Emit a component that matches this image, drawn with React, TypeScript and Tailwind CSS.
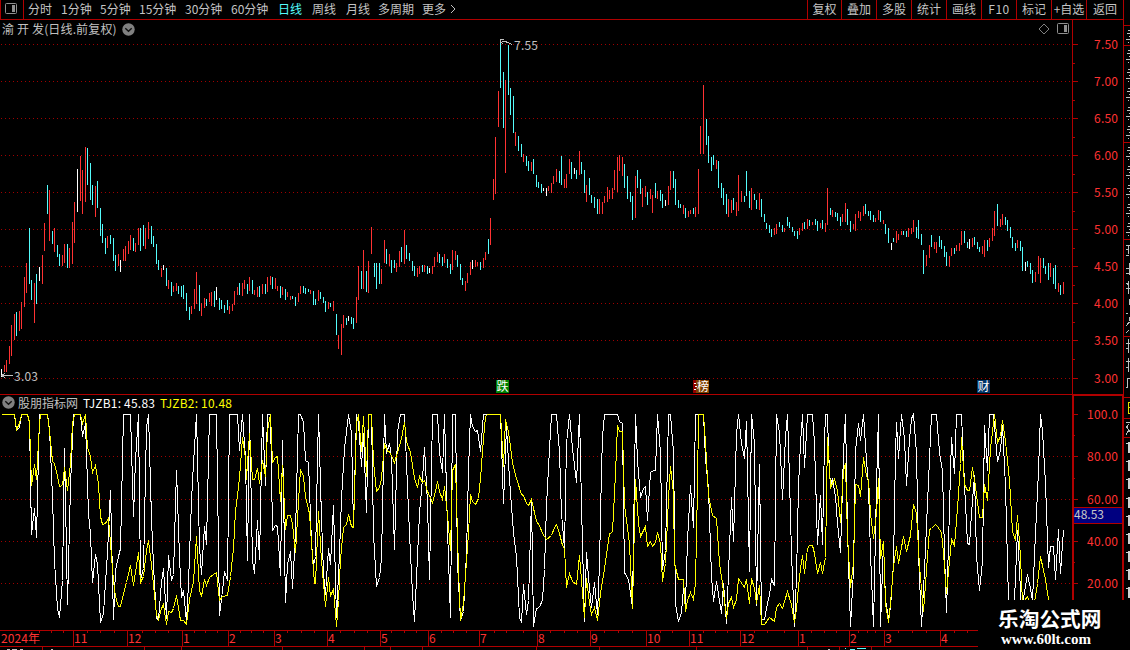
import React from 'react';

// Chart samples are stored in segments. Each one has an origin on the canvas and
// coordinates in thirds of a pixel, relative to that origin.
type Segment = { ox: number; oy: number; data: string };

const PRICE: Segment[] = [
  { ox: 0, oy: 140, data: 'w4 687 711;r13 675 696;r19 660 696;r28 618 672;r34 555 648;r43 522 600;c49 516 588;r58 513 573;r64 486 567;r73 411 501;r79 369 459;c88 264 432;c94 420 480;r103 429 549;c109 402 492;w118 381 423;r127 345 432;r133 249 333;c142 135 222;r148 150 303;c157 273 312;r163 264 336;c172 315 351;c178 342 378;r187 345 378;r193 312 369;c202 312 384;r208 324 384;r217 246 372;r223 186 309;w232 87 216;r241 48 183;r247 90 222;r256 21 186;c262 24 135;c271 69 180;c277 135 195;r286 138 231;c292 123 204;c301 204 288;c307 252 309;c316 294 342;r322 288 324;c331 285 312;c340 294 363;c346 345 393;r355 342 378;w361 360 396;r370 327 363;r376 318 363;r385 303 342;r391 285 330;c400 294 333;r406 309 336;r415 264 315;c421 264 333;c430 255 318;r436 264 327;r445 246 297;c454 258 312;c460 288 321;c469 312 372;c475 360 390;r484 384 411;w490 375 390;c499 384 438;r505 420 447;c514 426 468;r520 438 456;r529 429 453;c535 438 462;c544 438 471;c550 435 477;c559 459 513;c568 501 540;r574 498 522;r583 447 507;r589 396 492;c598 435 513;r604 489 528;r613 474 504;c619 477 498;r628 459 486;r634 456 498;c643 453 501;w649 441 480;c658 474 510;c664 480 507;c673 495 519;c682 480 510;r688 498 522;r697 492 513;r703 453 495;r712 441 465;c718 429 465;r727 429 468;r733 420 447;c742 432 462;r748 411 453;c757 420 462;r763 450 465;r772 441 471;c778 438 471;r787 432 462;c796 432 462;r802 411 456' },
  { ox: 270, oy: 200, data: 'r1 228 255;c7 231 267;r16 234 267;r22 258 273;c31 258 294;r37 261 285;c46 267 300;r52 276 291;r61 288 300;c67 288 297;c76 291 318;r85 279 306;r91 258 282;c100 258 279;c106 264 282;c115 267 276;r121 270 282;c130 273 315;c136 297 315;r145 270 303;c151 276 297;c160 291 309;c166 303 336;r175 306 327;c181 309 321;r190 303 333;c199 342 405;r205 405 447;r214 372 465;r220 345 384;c229 354 375;w235 348 363;c244 351 372;c250 354 387;r259 291 369;r265 198 300;c274 213 267;r280 150 267;c289 213 276;r295 183 279;r304 81 162;c313 189 231;c319 189 267;c328 189 252;r334 207 252;r343 120 189;c349 147 192;r358 162 198;c364 180 219;c373 180 204;r379 189 216;r388 153 201;c394 141 186;r403 90 192;c409 135 177;c418 159 183;c427 183 213;c433 198 228;r442 204 231;r448 198 222;c457 195 216;r463 195 216;c472 198 222;w478 204 219;r487 198 222;r493 171 201;r502 156 186;c508 162 189;c517 171 198;r523 162 189;c532 177 204;c541 192 222;r547 150 210;r556 153 180;c562 165 201;c571 192 240;c577 234 255;r586 243 273;r592 219 249;r601 186 225;w607 180 207;r616 180 201;r622 186 198;c631 186 210;r640 174 204;r646 156 180;c655 117 162;r661 54 135' },
  { ox: 470, oy: 30, data: 'r70 447 510;r76 321 492;r85 183 291;c91 39 174;c100 126 294;r106 150 429;c115 45 195;c121 174 255;c130 198 309;r136 306 348;c145 318 363;c154 342 381;r160 372 396;c169 378 408;c175 393 423;r184 396 423;c190 387 432;c199 435 471;c205 456 474;c214 462 489;w220 474 483;w229 474 498;r235 468 483;r244 459 489;r250 438 462;r259 417 456;c268 423 459;c274 378 465;r283 447 474;r289 432 474;r298 387 432;c304 396 447;w313 414 432;c319 420 447;r328 363 435;c334 396 432;c343 420 489;r349 465 516;c358 444 495;c364 495 519;c373 501 534;c382 507 552;r388 507 552;r397 516 552;r403 498 519;r412 471 516;r418 480 507;r427 474 507;r433 420 480;r442 381 486;r448 375 423;r457 381 438;c463 402 474;c472 438 507;c481 486 516;c487 498 570;r496 438 564;c502 420 474;c511 447 492;r517 474 531;r526 468 501;c532 486 525;r541 477 507;r547 495 549;c556 459 504;r562 483 507;c571 480 513;c577 492 534;w586 510 528;r595 468 525;r601 423 480;c610 423 474;c616 447 525;c625 510 534;c631 522 534;r640 525 552;c646 534 564;r655 543 561;r661 540 552;c670 534 552;r676 531 561;r685 417 552;r691 288 372' },
  { ox: 700, oy: 80, data: 'r10 15 222;c19 117 195;c25 168 249;c34 231 273;c40 225 255;r49 240 267;c55 243 324;c64 309 354;c70 324 375;c79 342 402;r85 357 411;r94 360 399;c100 354 390;r109 366 408;r115 285 393;r124 333 366;c133 348 366;c139 273 348;c148 333 384;r154 324 390;c163 342 360;c169 360 387;r178 339 390;c184 357 411;c193 402 426;c199 429 447;c208 435 459;c214 447 471;r223 444 465;r229 432 462;c238 426 441;c247 435 456;r253 444 456;c262 411 438;c268 426 444;c277 441 456;c283 453 468;c292 453 477;r298 444 465;r307 429 453;c313 426 447;r322 417 447;c328 420 438;r337 426 435;c346 417 435;c352 423 453;r361 429 444;c367 420 447;r376 429 456;r382 324 435;c391 384 405;r397 390 411;c406 396 411;c412 399 423;c421 411 438;r427 402 426;r436 369 426;c442 387 435;c451 423 456;r460 432 447;r466 402 453;r475 393 414;r481 396 423;r490 378 408;c496 372 402;c505 393 408;c511 393 420;c520 405 426;r526 414 426;r535 390 420;c541 393 426;r550 420 432;c556 432 462;c565 444 489;w574 489 510;c580 474 486;r589 453 489;r595 462 480;r604 453 465;c610 453 465;c619 453 471;r625 444 471;r634 444 462;r640 420 456;c649 441 474;c655 420 477;c664 462 495;c670 510 582;r679 525 558;r688 495 534;c694 465 501;r703 486 507;r709 486 519;c718 468 501;c724 480 507;c733 498 531;c739 516 558;r748 528 561;r754 504 528;c763 504 522;r769 495 513;r778 489 513;r784 453 495;c793 453 489;c802 486 504;w808 477 507;r817 474 501;c823 471 495;c832 486 507;c838 501 516;r847 498 522;r853 480 531;c862 480 513;r868 474 501;r877 444 483;r883 393 468;c892 372 438;r901 417 441;r907 402 435;c916 411 435;c922 420 453;c931 441 474;c937 471 504;c946 489 513;r952 480 504;c961 483 513;c967 501 573;w976 546 573;c982 543 561;c991 549 582;c997 570 609;r1006 576 606;r1015 528 582;r1021 534 609;c1030 534 564;c1036 558 582;c1045 549 600;r1051 549 591;c1060 564 612;c1066 555 627;r1075 609 636;c1081 615 645;r1090 606 642' },
];

const TJZB1: Segment[] = [
  { ox: 0, oy: 390, data: '3,73 43,73 49,121 58,112 64,73 82,73 88,97 94,433 103,355 109,442 118,73 142,73 148,118 157,319 163,514 172,655 178,682 187,571 193,175 202,643 211,287 220,73 241,73 247,139 256,100 264,370 271,433 278,577 286,493 293,523 302,697 309,670 322,487 331,300 340,688 347,540 355,500 361,475 370,73 391,73 400,380 406,208 415,73 421,568 430,535 438,112 445,73 454,385 460,526 469,685 475,688 484,577 490,535 499,685 506,495 514,571 520,553 529,241 537,502 544,622 550,601 559,694 566,580 574,330 580,220 589,73 598,472 604,553 613,409 619,463 628,73 649,73 658,676 667,601 673,544 682,571 688,73 712,73 718,181 727,73 735,205 742,511 748,73' },
  { ox: 250, oy: 390, data: '7,511 13,550 22,390 28,508 37,73 46,286 52,73 61,73 68,421 76,407 82,409 91,556 97,150 106,637 112,523 121,484 127,596 136,430 145,73 152,73 160,97 167,211 176,216 184,460 190,526 196,499 205,73 214,385 220,550 226,613 235,475 241,523 250,346 259,681 268,490 275,325 283,175 295,73 304,127 310,412 319,73 325,100 334,228 340,130 349,367 355,73 364,73 370,430 379,589 388,562 394,505 403,73 409,190 418,160 424,205 433,478 442,127 450,73 463,73 469,220 478,430 487,610 493,694 502,499 508,370 517,265 523,172 532,340 538,568 547,73 562,73 568,187 577,247 583,73 592,418 601,683 607,73 616,73 622,520 631,691 640,664 649,490 655,240 661,73 667,109 676,124 682,121 691,184 700,73 751,73 760,340 769,109 778,268 790,428 799,500 808,682' },
  { ox: 510, oy: 370, data: '34,757 40,643 49,733 55,691 64,388 70,769 79,715 88,712 97,687 103,598 109,405 118,235 124,133 139,133 148,247 155,430 163,535 170,220 178,133 187,235 199,337 208,133 214,403 223,754 229,547 238,654 244,712 253,637 262,733 268,580 274,300 277,200 283,133 322,133 328,154 337,160 340,400 344,607 355,628 367,712 371,500 376,133 382,270 391,382 400,355 406,349 412,451 421,307 430,301 436,301 442,133 451,250 457,598 466,540 472,270 475,133 481,133 490,247 496,700 505,754 514,727 520,655 526,700 532,510 541,346 550,472 556,133 580,133 586,265 594,355 604,620 610,694 619,634 634,730 640,640 649,760 655,610 664,382 670,514 679,190 685,133 694,220 703,265 709,154 718,604 725,133 733,220 739,706 748,283 754,748 763,748 769,715 778,673 784,628 793,646' },
  { ox: 770, oy: 370, data: '19,133 28,187 37,388 46,200 52,133 58,325 64,550 73,769 79,620 85,350 91,220 97,133 103,292 112,133 127,133 133,220 142,523 151,376 157,523 163,210 166,133 172,133 175,240 181,350 187,325 196,379 202,460 211,547 220,250 226,133 232,480 241,769 250,600 256,240 265,160 271,211 280,133 289,270 295,350 301,550 310,769 319,350 325,133 331,769 340,517 346,688 355,745 361,712 370,580 376,250 380,157 385,265 394,133 403,205 409,346 418,208 424,145 430,133 439,250 445,550 454,769 463,600 472,400 484,133 499,133 508,247 516,300 523,550 529,727 535,520 544,202 553,310 559,133 574,133 583,343 592,520 598,523 604,430 613,315 620,560 628,661 637,574 643,166 652,301 658,133 671,133 683,274 690,240 697,166 707,350 715,690 733,690 742,480 749,600 754,720 762,668 772,613 780,655 787,690 796,490 805,300 811,133 817,184 826,340 835,592 841,529 850,529 856,628 865,478 871,610 877,520 881,481' },
];

const TJZB2: Segment[] = [
  { ox: 0, oy: 390, data: '3,73 43,73 49,118 58,100 64,73 82,73 88,97 94,286 103,223 109,268 118,100 121,73 142,73 148,120 157,214 163,220 172,259 178,289 187,286 193,232 202,301 211,220 217,100 223,73 241,73 247,100 256,73 262,171 271,199 277,247 286,226 294,283 301,379 308,403 317,400 325,385 331,460 340,574 347,619 356,649 361,649 370,610 380,577 391,526 400,586 415,487 421,577 430,559 438,481 445,451 454,524 469,673 475,688 484,655 490,643 499,703 506,663 514,667 520,655 529,616 540,691 550,691 559,703 568,628 580,574 589,439 598,601 604,619 613,568 619,586 628,562 640,553 649,547 658,631 667,619 682,616 690,559 700,475 706,364 718,265 727,142 735,205 739,268 748,130' },
  { ox: 250, oy: 390, data: '7,268 13,268 22,235 28,280 37,211 46,259 52,120 61,73 68,217 76,203 82,199 91,334 97,226 106,418 112,376 121,376 127,403 136,487 145,334 152,238 160,259 167,319 178,370 184,460 192,580 197,580 205,364 214,511 220,580 226,649 235,562 241,619 250,595 259,709 265,630 271,508 280,412 288,403 295,373 304,409 310,413 319,100 325,73 334,184 340,80 349,259 355,73 364,73 370,214 379,304 388,292 394,265 403,160 412,184 418,184 433,217 442,187 454,145 463,97 469,153 480,187 493,265 502,292 508,259 517,277 523,271 532,304 547,337 556,304 562,274 568,304 577,328 583,289 592,373 601,481 607,241 616,223 625,538 631,691 640,640 655,430 661,313 667,334 676,343 685,325 691,265 700,145 706,80 712,73 751,73 760,229 766,88 775,127' },
  { ox: 510, oy: 370, data: '1,229 7,280 19,325 34,373 40,376 49,400 55,407 64,388 79,455 88,466 97,490 109,508 124,497 133,472 139,463 148,490 157,526 163,535 169,653 178,610 187,634 199,643 208,556 223,742 229,625 238,700 244,733 253,712 262,750 271,670 283,595 298,490 307,487 316,310 322,166 328,184 337,184 343,403 349,450 358,520 367,715 376,328 385,460 391,499 406,469 412,529 421,514 427,529 436,517 442,487 451,520 457,634 466,580 475,385 481,289 490,370 494,580 505,628 520,628 526,724 532,690 541,667 550,688 556,640 562,350 565,133 580,133 586,220 595,376 607,436 619,445 628,580 637,640 649,745 655,700 664,682 670,712 679,688 685,625 703,652 709,628 718,700 725,625 733,655 739,700 748,646 754,763 763,763 778,742' },
  { ox: 770, oy: 370, data: '13,753 19,712 28,700 37,715 52,664 64,703 73,757 79,715 85,649 91,595 97,556 103,610 112,535 118,526 127,526 133,550 142,610 151,577 157,610 166,562 172,202 181,352 193,328 202,360 211,457 220,300 226,280 232,500 241,652 250,580 256,343 265,346 271,379 280,262 289,319 295,328 301,430 310,506 319,430 325,325 331,565 340,514 346,700 355,757 361,700 370,590 379,529 385,580 400,499 409,544 421,496 430,403 439,430 448,590 460,724 472,560 478,478 484,475 495,463 502,470 514,487 520,550 529,670 544,508 553,526 562,415 571,280 574,202 583,343 592,361 598,361 607,292 613,328 628,442 637,442 643,343 652,391 661,235 673,133 683,217 690,200 697,151 706,214 718,330 727,484 736,511 742,436 751,560 757,700 772,680 787,720 796,680 802,640 811,559 826,628 835,688 841,740' },
];

const BAR_COLORS: Record<string, string> = { r: '#ff3232', c: '#54fcfc', w: '#ffffff' };

const bars = PRICE.flatMap(({ ox, oy, data }) =>
  data.split(';').map((item) => {
    const [x, top, bottom] = item.slice(1).split(' ').map(Number);
    return {
      x: ox + Math.floor(x / 3),
      y: oy + top / 3,
      h: (bottom - top) / 3,
      fill: BAR_COLORS[item[0]],
    };
  }),
);

const linePoints = (segments: Segment[]) =>
  segments
    .flatMap(({ ox, oy, data }) =>
      data.split(' ').map((pair) => {
        const [x, y] = pair.split(',').map(Number);
        return `${ox + Math.floor(x / 3) + 0.5},${oy + Math.floor(y / 3) + 0.5}`;
      }),
    )
    .join(' ');

const PERIODS: [string, string][] = [
  ['分时', 'w-[33px]'],
  ['1分钟', 'w-[39px]'],
  ['5分钟', 'w-[39px]'],
  ['15分钟', 'w-[46px]'],
  ['30分钟', 'w-[46px]'],
  ['60分钟', 'w-[47px]'],
  ['日线', 'w-[34px]'],
  ['周线', 'w-[34px]'],
  ['月线', 'w-[32px]'],
  ['多周期', 'w-[44px]'],
  ['更多', 'w-[27px]'],
];

const TOOLS: [string, string][] = [
  ['复权', 'w-[34px]'],
  ['叠加', 'w-[35px]'],
  ['多股', 'w-[35px]'],
  ['统计', 'w-[35px]'],
  ['画线', 'w-[35px]'],
  ['F10', 'w-[35px]'],
  ['标记', 'w-[35px]'],
  ['+自选', 'w-[35px]'],
  ['返回', 'w-[37px]'],
];

const PRICE_LEVELS: [number, string][] = [
  [44, '7.50'], [81, '7.00'], [118, '6.50'], [155, '6.00'], [192, '5.50'],
  [229, '5.00'], [266, '4.50'], [303, '4.00'], [340, '3.50'], [378, '3.00'],
];
const PRICE_MINOR = [63, 100, 137, 174, 211, 248, 285, 322, 359];

const IND_LEVELS: [number, string][] = [
  [414, '100.0'], [456, '80.00'], [499, '60.00'], [541, '40.00'], [583, '20.00'],
];
const IND_MINOR = [435, 478, 520, 562];

const MONTHS: [number, string][] = [
  [73, '11'], [127, '12'], [182, '1'], [228, '2'], [274, '3'], [327, '4'], [380, '5'],
  [428, '6'], [479, '7'], [537, '8'], [590, '9'], [646, '10'], [689, '11'], [740, '12'],
  [798, '1'], [849, '2'], [884, '3'], [940, '4'],
];
const WEEK_TICKS = [
  39, 51, 63, 87, 100, 114, 142, 155, 168, 194, 205, 217, 240, 251, 263, 287, 301, 314, 340,
  354, 367, 391, 404, 416, 441, 453, 466, 494, 506, 523, 550, 564, 577, 604, 618, 632, 660,
  672, 703, 715, 727, 754, 767, 784, 811, 824, 836, 858, 867, 875, 898, 912, 926, 954, 967,
];

const RED = '#b00000';
const LABEL = '#ff3232';

function Gridline({ y }: { y: number }) {
  return <line x1={1} x2={1071} y1={y + 0.5} y2={y + 0.5} stroke="#a00000" strokeDasharray="1 3" />;
}

function PanelIcon({ className }: { className?: string }) {
  return (
    <svg width="13" height="12" viewBox="0 0 13 12" className={className}>
      <rect x="0.5" y="0.5" width="11" height="10" rx="1" fill="none" stroke="#909090" />
      <rect x="7" y="2" width="3" height="7" fill="#909090" />
    </svg>
  );
}

function ChevronBadge() {
  return (
    <svg width="13" height="13" viewBox="0 0 13 13" className="shrink-0">
      <circle cx="6.5" cy="6.5" r="6.2" fill="#808080" />
      <path d="M3.3 5.2 6.5 8.2 9.7 5.2" fill="none" stroke="#101010" strokeWidth="1.4" />
    </svg>
  );
}

function TopBar() {
  return (
    <div className="flex h-5 items-stretch border-b border-[#b00000] text-[#c4c4c4]">
      <div className="flex w-6 items-start border-x border-[#b00000] pt-[3px] pl-1">
        <PanelIcon />
      </div>
      <div className="flex flex-1 items-center pb-[2px] pl-1">
        {PERIODS.map(([label, width]) => (
          <span key={label} className={`${width} ${label === '日线' ? 'text-[#54fcfc]' : ''}`}>
            {label}
          </span>
        ))}
        <svg width="8" height="10" viewBox="0 0 8 10">
          <path d="M2 1 6 5 2 9" fill="none" stroke="#c0c0c0" />
        </svg>
      </div>
      {TOOLS.map(([label, width]) => (
        <div
          key={label}
          className={`flex items-center justify-center border-l border-[#b00000] pb-[2px] ${width} ${label === 'F10' ? 'tracking-[0.5px]' : ''}`}
        >
          {label}
        </div>
      ))}
    </div>
  );
}

function PriceChart() {
  return (
    <svg width="1072" height="357" viewBox="0 38 1072 357" className="block overflow-visible" shapeRendering="crispEdges">
      {PRICE_LEVELS.map(([y]) => (
        <Gridline key={y} y={y} />
      ))}
      {bars.map((b, i) => (
        <rect key={i} x={b.x} y={b.y} width={1} height={b.h} fill={b.fill} />
      ))}
      <path d="M500.5 43V39.5H504M501 42l2 2M502 41.5h3l3 1 4 2" fill="none" stroke="#c0c0c0" />
      <path d="M1 375.5H13M5 373 2 375.5 5 378" fill="none" stroke="#c0c0c0" />
      <g fill="#c0c0c0" fontSize="12">
        <text x="514" y="50" textLength="24">7.55</text>
        <text x="14" y="381" textLength="24">3.03</text>
      </g>
      <rect x="496" y="380" width="13" height="13" fill="#008000" />
      <rect x="693" y="380" width="4" height="13" fill="#900000" />
      <rect x="696" y="380" width="13" height="13" fill="#804000" />
      <path d="M694 383.5h1.5M695 386.5h1.5M694 389.5h1.5" stroke="#fff" />
      <rect x="977" y="380" width="13" height="13" fill="#003468" />
      <g fill="#fff" fontSize="12">
        <text x="496.5" y="391">跌</text>
        <text x="697" y="391">榜</text>
        <text x="977.5" y="391">财</text>
      </g>
      <rect x="0" y="394" width="1072" height="1" fill={RED} />
    </svg>
  );
}

function IndicatorChart() {
  return (
    <svg width="1072" height="218" viewBox="0 412 1072 218" className="block" shapeRendering="crispEdges">
      {IND_LEVELS.slice(1).map(([y]) => (
        <Gridline key={y} y={y} />
      ))}
      <polyline points={linePoints(TJZB1)} fill="none" stroke="#ffffff" />
      <polyline points={linePoints(TJZB2)} fill="none" stroke="#ffff00" />
    </svg>
  );
}

function TimeAxis() {
  return (
    <svg width="1072" height="20" viewBox="0 630 1072 20" className="block" shapeRendering="crispEdges">
      <rect x="0" y="630" width="978" height="1" fill={RED} />
      <rect x="0" y="646" width="978" height="1" fill={RED} />
      {WEEK_TICKS.map((x) => (
        <rect key={x} x={x} y="630" width="1" height="3" fill={RED} />
      ))}
      {MONTHS.map(([x, label]) => (
        <g key={x}>
          <rect x={x} y="630" width="1" height="16" fill={RED} />
          <text x={x + 1} y="643" fill={LABEL} fontSize="12">{label}</text>
        </g>
      ))}
      <text x="1" y="643" fill={LABEL} fontSize="12" textLength="39">2024年</text>
      {[42, 144, 181, 282, 364, 390, 422, 536, 599, 696, 807, 839, 871].map((x) => (
        <rect key={x} x={x} y="647" width="1" height="3" fill={RED} />
      ))}
      <path d="M7 649.5h3M12 649.5h5M20 649.5h3M51 649.5h2M828 649.5h2" stroke="#c0c0c0" />
      <path d="M845 648.5h1M850 649.5h5M857 648.5h9" stroke="#54fcfc" />
    </svg>
  );
}

function ValueAxis() {
  return (
    <svg width="51" height="630" viewBox="1072 20 51 630" className="block shrink-0" shapeRendering="crispEdges">
      <rect x="1072" y="20" width="1" height="374" fill={RED} />
      {PRICE_LEVELS.map(([y, label]) => (
        <g key={y}>
          <rect x="1073" y={y} width="5" height="1" fill={RED} />
          <text x="1094" y={y + 5} fill={LABEL} fontSize="12" textLength="24">{label}</text>
        </g>
      ))}
      {PRICE_MINOR.map((y) => (
        <rect key={y} x="1073" y={y} width="2" height="1" fill={RED} />
      ))}
      <rect x="1072" y="394" width="51" height="2" fill={RED} />
      <rect x="1072" y="394" width="2" height="236" fill={RED} />
      <rect x="1122" y="394" width="1" height="236" fill={RED} />
      {IND_LEVELS.map(([y, label]) => (
        <g key={y}>
          <rect x="1074" y={y} width="4" height="1" fill={RED} />
          <text x="1087" y={y + 5} fill={LABEL} fontSize="12" textLength="31">{label}</text>
        </g>
      ))}
      {IND_MINOR.map((y) => (
        <rect key={y} x="1074" y={y} width="1" height="1" fill={RED} />
      ))}
      <rect x="1074" y="507" width="48" height="17" fill={RED} />
      <rect x="1074" y="508" width="48" height="15" fill="#000080" />
      <text x="1074" y="519" fill="#c8c8c8" fontSize="12" textLength="30">48.53</text>
    </svg>
  );
}

// Narrow slice of the neighbouring quote panel.
function QuoteEdge() {
  return (
    <svg width="7" height="650" viewBox="1123 0 7 650" className="block shrink-0" shapeRendering="crispEdges">
      <rect x="1123" y="0" width="1" height="650" fill={RED} />
      {[25, 45, 142, 239, 336, 397, 418, 437].map((y) => (
        <rect key={y} x="1124" y={y} width="6" height="1" fill={RED} />
      ))}
      {[28, 48, 67, 86, 105, 124, 145, 164, 183, 202, 221].map((y) => (
        <path
          key={y}
          d={`M1128 ${y + 2.5}h2M1127 ${y + 5.5}h3M1129 ${y + 8.5}h1M1126 ${y + 11.5}h4M1128 ${y + 14.5}h1`}
          stroke="#c0c0c0"
        />
      ))}
      <path
        d="M1126 245.5h4M1128.5 246v8M1126 249.5h3M1126 255.5h3M1129.5 263v12M1126 268.5h3M1126 273.5h3M1126 283.5l3 1M1126 288.5h4M1128.5 281v13M1129.5 299v6M1126 313.5h2M1129 317v4M1129.5 322l-3.5 4M1126 333l3-3M1128.5 339v14M1126 343.5h4M1126 348.5h2M1126 361.5h4M1128.5 358v14M1126 367.5h2M1127.5 378v10M1127 378.5h3M1126 387.5h2"
        fill="none"
        stroke="#c0c0c0"
      />
      <path d="M1130 402.5h-2v11h2M1128 407.5h2" fill="none" stroke="#e0e000" />
      <path d="M1126 422.5h4M1129 424l-3 4M1127 427l3 5M1129 430l-3 5" fill="none" stroke="#c0c0c0" />
      {[442, 460, 478, 497, 515, 533, 551, 569, 587].map((y) => (
        <path key={y} d={`M1129 ${y}v11M1126 ${y + 1.5}h3`} stroke="#d0d0d0" strokeWidth="1.5" />
      ))}
    </svg>
  );
}

export default function App() {
  return (
    <div className="relative flex h-[650px] w-[1130px] overflow-hidden bg-black font-['Noto_Sans_CJK_SC','Liberation_Sans',sans-serif] text-[12px] leading-none whitespace-nowrap">
      <div className="flex w-[1123px] shrink-0 flex-col">
        <TopBar />
        <div className="flex">
          <div className="flex w-[1072px] shrink-0 flex-col">
            <div className="flex h-[18px] items-center pl-[2px] text-[#c0c0c0]">
              <span className="w-[120px] pb-px tracking-[0.15px]">渝 开 发(日线.前复权)</span>
              <ChevronBadge />
              <div className="ml-auto flex items-center gap-[7px] pr-[2px]">
                <svg width="12" height="12" viewBox="0 0 12 12">
                  <path d="M6 1 11 6 6 11 1 6Z" fill="none" stroke="#808080" />
                </svg>
                <PanelIcon />
              </div>
            </div>
            <PriceChart />
            <div className="flex h-[17px] items-center pb-[2px] pl-[2px]">
              <ChevronBadge />
              <span className="ml-[3px] w-[65px] text-[#c0c0c0]">股朋指标网</span>
              <span className="w-[77px] tracking-[0.2px] text-white">TJZB1: 45.83</span>
              <span className="tracking-[0.2px] text-[#ffff00]">TJZB2: 10.48</span>
            </div>
            <IndicatorChart />
            <TimeAxis />
          </div>
          <ValueAxis />
        </div>
      </div>
      <QuoteEdge />
      <div className="absolute right-0 bottom-0 flex h-[50px] w-[152px] flex-col items-start bg-black pt-[8px] pl-5 text-white">
        <div className="text-[20.7px] leading-[21px] font-bold">乐淘公式网</div>
        <div className="mt-[2px] ml-[3px] font-['Liberation_Serif',serif] text-[15px] leading-[17px] font-bold">
          www.60lt.com
        </div>
      </div>
    </div>
  );
}
